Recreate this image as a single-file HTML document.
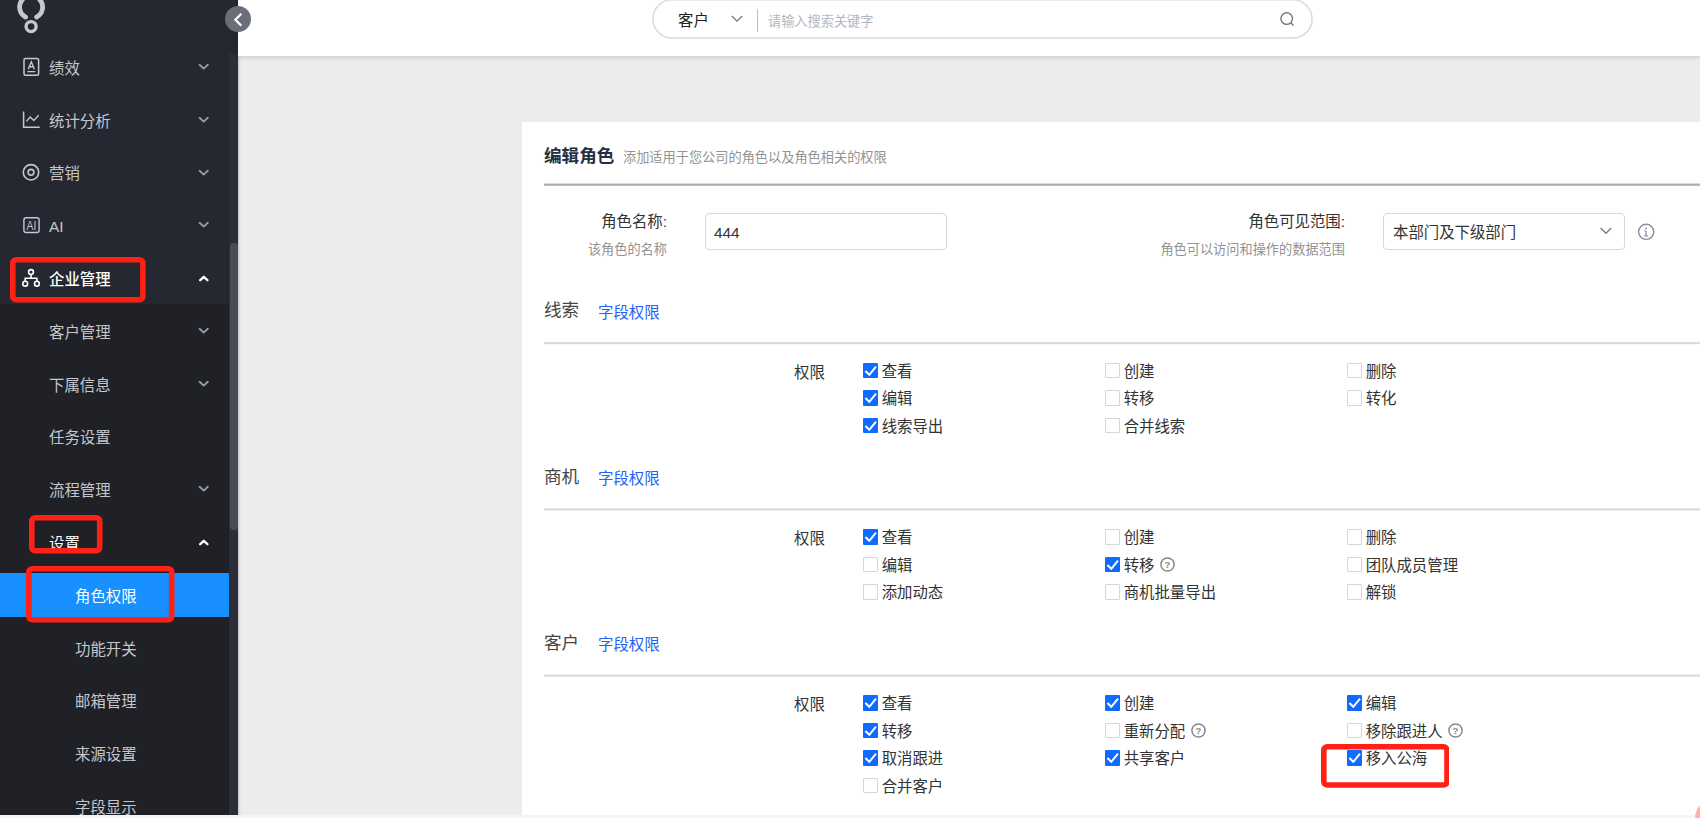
<!DOCTYPE html>
<html lang="zh-CN">
<head>
<meta charset="utf-8">
<title>编辑角色</title>
<style>
*{box-sizing:border-box;margin:0;padding:0}
html,body{width:1700px;height:818px;overflow:hidden;background:#ececec}
body{font-family:"Liberation Sans","Noto Sans CJK SC",sans-serif;font-size:15.4px;color:#333;position:relative}
.abs{position:absolute}
/* sidebar */
#side{position:absolute;left:0;top:0;width:229px;height:815px;background:#252830;overflow:hidden}
#sub{position:absolute;left:0;top:304px;width:229px;height:511px;background:#1f2127}
#track{position:absolute;left:229px;top:0;width:9px;height:815px;background:#2c2f39;box-shadow:1px 0 3px rgba(0,0,0,.18)}
#tracktop{position:absolute;left:229px;top:0;width:9px;height:54px;background:#252830}
#thumb{position:absolute;left:229.5px;top:243px;width:8.5px;height:287px;background:#494c56;border-radius:4px}
.mi{position:absolute;left:0;width:229px;height:44px;line-height:44px;color:#c5c7cd;font-size:15.4px;white-space:nowrap}
.mi span{position:absolute;top:1.9px}
.mi.on{color:#fff}
#active{position:absolute;left:0;top:573px;width:229px;height:44px;background:#1890ff}
/* header */
#head{position:absolute;left:238px;top:0;width:1462px;height:56px;background:#fff;box-shadow:0 1px 5px rgba(0,0,0,.17)}
/* card */
#card{position:absolute;left:522px;top:122px;width:1178px;height:693px;background:#fff}
#bottom{position:absolute;left:0;top:815px;width:1700px;height:3px;background:#f3f4f8}
.t{position:absolute;white-space:nowrap;line-height:20px;margin-top:1px}
.g{color:#939393;font-size:13.2px}
.lk{color:#2163f8}
.cb{position:absolute;width:15.5px;height:15.5px;border:1px solid #d6d6d6;border-radius:1px;background:#fff}
.cb.ck{border:none;background:#0f6bff}
.cb.ck svg{position:absolute;left:0;top:0}
</style>
</head>
<body>
<div id="side">
  <div id="sub"></div>
  <div id="active"></div>
</div>
<div id="track"></div><div id="tracktop"></div><div id="thumb"></div>
<div id="head"></div>
<svg class="abs" style="left:650px;top:0" width="666" height="42" viewBox="0 0 666 42"><rect x="2.9" y="-0.2" width="659.2" height="38.3" rx="19.2" fill="#fff" stroke="#d9d9d9" stroke-width="1.5"/></svg>
<div id="card"></div>
<div id="bottom"></div>
<div id="menu">
<div class="mi" style="top:45.0px"><span style="left:49px">绩效</span></div>
<svg class="abs" style="left:198px;top:63.0px" width="11" height="8" viewBox="0 0 11 8"><path d="M1.6 1.8 L5.7 5.6 L9.8 1.8" fill="none" stroke="#969aa2" stroke-width="1.9" stroke-linecap="round" stroke-linejoin="round"/></svg>
<div class="mi" style="top:97.8px"><span style="left:49px">统计分析</span></div>
<svg class="abs" style="left:198px;top:115.8px" width="11" height="8" viewBox="0 0 11 8"><path d="M1.6 1.8 L5.7 5.6 L9.8 1.8" fill="none" stroke="#969aa2" stroke-width="1.9" stroke-linecap="round" stroke-linejoin="round"/></svg>
<div class="mi" style="top:150.6px"><span style="left:49px">营销</span></div>
<svg class="abs" style="left:198px;top:168.6px" width="11" height="8" viewBox="0 0 11 8"><path d="M1.6 1.8 L5.7 5.6 L9.8 1.8" fill="none" stroke="#969aa2" stroke-width="1.9" stroke-linecap="round" stroke-linejoin="round"/></svg>
<div class="mi" style="top:203.4px"><span style="left:49px">AI</span></div>
<svg class="abs" style="left:198px;top:221.4px" width="11" height="8" viewBox="0 0 11 8"><path d="M1.6 1.8 L5.7 5.6 L9.8 1.8" fill="none" stroke="#969aa2" stroke-width="1.9" stroke-linecap="round" stroke-linejoin="round"/></svg>
<div class="mi on" style="top:256.2px;font-weight:500"><span style="left:49px">企业管理</span></div>
<svg class="abs" style="left:198px;top:274.2px" width="11" height="8" viewBox="0 0 11 8"><path d="M2.2 6.2 L5.8 2.8 L9.4 6.2" fill="none" stroke="#fff" stroke-width="2.3" stroke-linecap="round" stroke-linejoin="round"/></svg>
<div class="mi" style="top:309.0px"><span style="left:49px">客户管理</span></div>
<svg class="abs" style="left:198px;top:327.0px" width="11" height="8" viewBox="0 0 11 8"><path d="M1.6 1.8 L5.7 5.6 L9.8 1.8" fill="none" stroke="#969aa2" stroke-width="1.9" stroke-linecap="round" stroke-linejoin="round"/></svg>
<div class="mi" style="top:361.8px"><span style="left:49px">下属信息</span></div>
<svg class="abs" style="left:198px;top:379.8px" width="11" height="8" viewBox="0 0 11 8"><path d="M1.6 1.8 L5.7 5.6 L9.8 1.8" fill="none" stroke="#969aa2" stroke-width="1.9" stroke-linecap="round" stroke-linejoin="round"/></svg>
<div class="mi" style="top:414.6px"><span style="left:49px">任务设置</span></div>
<div class="mi" style="top:467.4px"><span style="left:49px">流程管理</span></div>
<svg class="abs" style="left:198px;top:485.4px" width="11" height="8" viewBox="0 0 11 8"><path d="M1.6 1.8 L5.7 5.6 L9.8 1.8" fill="none" stroke="#969aa2" stroke-width="1.9" stroke-linecap="round" stroke-linejoin="round"/></svg>
<div class="mi on" style="top:520.2px"><span style="left:49px">设置</span></div>
<svg class="abs" style="left:198px;top:538.2px" width="11" height="8" viewBox="0 0 11 8"><path d="M2.2 6.2 L5.8 2.8 L9.4 6.2" fill="none" stroke="#fff" stroke-width="2.3" stroke-linecap="round" stroke-linejoin="round"/></svg>
<div class="mi on" style="top:573.0px"><span style="left:75px">角色权限</span></div>
<div class="mi" style="top:625.8px"><span style="left:75px">功能开关</span></div>
<div class="mi" style="top:678.6px"><span style="left:75px">邮箱管理</span></div>
<div class="mi" style="top:731.4px"><span style="left:75px">来源设置</span></div>
<div class="mi" style="top:784.2px"><span style="left:75px">字段显示</span></div>
</div>
<svg class="abs" style="left:14px;top:0" width="36" height="36" viewBox="0 0 36 36"><path d="M11.55 17.1 A11.5 11.5 0 1 1 22.65 17.1" fill="none" stroke="#c5c8d0" stroke-width="4.8" stroke-linecap="round"/><circle cx="17.1" cy="26.6" r="5" fill="none" stroke="#c5c8d0" stroke-width="3.4"/></svg>
<svg class="abs" style="left:22px;top:57px" width="20" height="20" viewBox="0 0 20 20"><rect x="2" y="1.6" width="14.6" height="16.6" rx="1.5" fill="none" stroke="#c5c8d0" stroke-width="1.5"/><path d="M6.2 12.2 L9.3 4.8 L12.4 12.2 M7.4 9.8 H11.2 M5.4 14.6 H13.2" fill="none" stroke="#c5c8d0" stroke-width="1.4"/></svg>
<svg class="abs" style="left:22px;top:110px" width="20" height="20" viewBox="0 0 20 20"><path d="M1.6 1.4 V17.2 H17.8" fill="none" stroke="#c5c8d0" stroke-width="1.5"/><path d="M4.4 11.4 L8.2 7 L11.8 10.6 L16.6 5.2" fill="none" stroke="#c5c8d0" stroke-width="1.4"/></svg>
<svg class="abs" style="left:21px;top:162px" width="20" height="20" viewBox="0 0 20 20"><circle cx="10" cy="10.3" r="7.7" fill="none" stroke="#c5c8d0" stroke-width="1.6"/><circle cx="10" cy="10.3" r="2.9" fill="none" stroke="#c5c8d0" stroke-width="1.6"/></svg>
<svg class="abs" style="left:22px;top:216px" width="20" height="20" viewBox="0 0 20 20"><rect x="1.9" y="1.7" width="15.2" height="14.8" rx="2.2" fill="none" stroke="#c5c8d0" stroke-width="1.4"/><text x="0" y="0" transform="translate(9.5 13.7) scale(0.82 1)" font-family="Liberation Sans, sans-serif" font-size="12.6" fill="#c5c8d0" text-anchor="middle">AI</text></svg>
<svg class="abs" style="left:21px;top:267px" width="20" height="20" viewBox="0 0 20 20"><g fill="none" stroke="#fff" stroke-width="1.6"><circle cx="10" cy="5" r="2.4"/><circle cx="4.2" cy="16.7" r="2.4"/><circle cx="15.9" cy="16.7" r="2.4"/><path d="M10 7.4 V11.2 M4.2 14.3 V11.2 H15.9 V14.3"/></g></svg>
<svg class="abs" style="left:224px;top:4.5px" width="28" height="28" viewBox="0 0 28 28"><circle cx="14" cy="14" r="13" fill="#6a6e78"/><path d="M17.3 8.8 L11.4 14.7 L17.3 20.6" fill="none" stroke="#fff" stroke-width="2.2" stroke-linecap="butt" stroke-linejoin="miter"/></svg>
<div class="t" style="left:678px;top:10px;font-size:15.4px;color:#222">客户</div>
<svg class="abs" style="left:730px;top:14.3px" width="14" height="10" viewBox="0 0 14 10"><path d="M1.8 2 L7 7.2 L12.2 2" fill="none" stroke="#777" stroke-width="1.3"/></svg>
<div class="abs" style="left:757px;top:9px;width:1px;height:23px;background:#bdbdbd"></div>
<div class="t" style="left:768px;top:10.8px;font-size:13.2px;color:#b3b6c2">请输入搜索关键字</div>
<svg class="abs" style="left:1278px;top:10px" width="20" height="20" viewBox="0 0 20 20"><circle cx="8.7" cy="8.6" r="5.8" fill="none" stroke="#777" stroke-width="1.4"/><path d="M12.9 12.9 L15.6 15.4" stroke="#777" stroke-width="1.4" fill="none"/></svg>
<div class="t" style="left:544px;top:144.5px;font-size:17.6px;font-weight:bold;color:#262f42">编辑角色</div>
<div class="t g" style="left:623px;top:147px">添加适用于您公司的角色以及角色相关的权限</div>
<svg class="abs" style="left:544px;top:182px" width="1156" height="6" viewBox="0 0 1156 6"><rect x="0" y="1.6" width="1156" height="2.2" fill="#adadad"/></svg>
<div class="t" style="right:1033px;top:211px">角色名称:</div>
<div class="t g" style="right:1033px;top:239px">该角色的名称</div>
<div class="abs" style="left:705px;top:213.2px;width:242px;height:37.3px;border:1px solid #d9d9d9;border-radius:4px"></div>
<div class="t" style="left:714px;top:222px">444</div>
<div class="t" style="right:355px;top:211px">角色可见范围:</div>
<div class="t g" style="right:355px;top:239px">角色可以访问和操作的数据范围</div>
<div class="abs" style="left:1383px;top:213.2px;width:242px;height:37.3px;border:1px solid #d9d9d9;border-radius:4px"></div>
<div class="t" style="left:1393px;top:222px">本部门及下级部门</div>
<svg class="abs" style="left:1599px;top:226px" width="14" height="10" viewBox="0 0 14 10"><path d="M1.6 2 L7 7.3 L12.2 2" fill="none" stroke="#7c7c7c" stroke-width="1.4"/></svg>
<svg class="abs" style="left:1637px;top:223px" width="18" height="18" viewBox="0 0 18 18"><circle cx="9.2" cy="8.8" r="7.6" fill="none" stroke="#8a8f9e" stroke-width="1.4"/><path d="M9 8 V12.6 M7.4 8 H9 M7.2 12.8 H10.8" stroke="#8a8f9e" stroke-width="1.2" fill="none"/><circle cx="9" cy="5.4" r="0.9" fill="#8a8f9e"/></svg>
<div class="t" style="left:544px;top:299.4px;font-size:17.6px;color:#454545">线索</div>
<div class="t lk" style="left:598px;top:302px">字段权限</div>
<svg class="abs" style="left:544px;top:341px" width="1156" height="5" viewBox="0 0 1156 5"><rect x="0" y="1.20" width="1156" height="2" fill="#d8d8d8"/></svg>
<div class="t" style="left:794px;top:361.6px">权限</div>
<div class="cb ck" style="left:862.6px;top:362.7px"><svg width="15.5" height="15.5" viewBox="0 0 15.5 15.5"><path d="M2.4 8 L6.3 11.8 L13 3.6" fill="none" stroke="#fff" stroke-width="2"/></svg></div>
<div class="t" style="left:881.7px;top:360.7px">查看</div>
<div class="cb" style="left:1104.6px;top:362.7px"></div>
<div class="t" style="left:1123.7px;top:360.7px">创建</div>
<div class="cb" style="left:1346.6px;top:362.7px"></div>
<div class="t" style="left:1365.7px;top:360.7px">删除</div>
<div class="cb ck" style="left:862.6px;top:390.2px"><svg width="15.5" height="15.5" viewBox="0 0 15.5 15.5"><path d="M2.4 8 L6.3 11.8 L13 3.6" fill="none" stroke="#fff" stroke-width="2"/></svg></div>
<div class="t" style="left:881.7px;top:388.2px">编辑</div>
<div class="cb" style="left:1104.6px;top:390.2px"></div>
<div class="t" style="left:1123.7px;top:388.2px">转移</div>
<div class="cb" style="left:1346.6px;top:390.2px"></div>
<div class="t" style="left:1365.7px;top:388.2px">转化</div>
<div class="cb ck" style="left:862.6px;top:417.7px"><svg width="15.5" height="15.5" viewBox="0 0 15.5 15.5"><path d="M2.4 8 L6.3 11.8 L13 3.6" fill="none" stroke="#fff" stroke-width="2"/></svg></div>
<div class="t" style="left:881.7px;top:415.7px">线索导出</div>
<div class="cb" style="left:1104.6px;top:417.7px"></div>
<div class="t" style="left:1123.7px;top:415.7px">合并线索</div>
<div class="t" style="left:544px;top:465.7px;font-size:17.6px;color:#454545">商机</div>
<div class="t lk" style="left:598px;top:468.3px">字段权限</div>
<svg class="abs" style="left:544px;top:507px" width="1156" height="5" viewBox="0 0 1156 5"><rect x="0" y="1.40" width="1156" height="2" fill="#d8d8d8"/></svg>
<div class="t" style="left:794px;top:527.9px">权限</div>
<div class="cb ck" style="left:862.6px;top:529.0px"><svg width="15.5" height="15.5" viewBox="0 0 15.5 15.5"><path d="M2.4 8 L6.3 11.8 L13 3.6" fill="none" stroke="#fff" stroke-width="2"/></svg></div>
<div class="t" style="left:881.7px;top:527.0px">查看</div>
<div class="cb" style="left:1104.6px;top:529.0px"></div>
<div class="t" style="left:1123.7px;top:527.0px">创建</div>
<div class="cb" style="left:1346.6px;top:529.0px"></div>
<div class="t" style="left:1365.7px;top:527.0px">删除</div>
<div class="cb" style="left:862.6px;top:556.5px"></div>
<div class="t" style="left:881.7px;top:554.5px">编辑</div>
<div class="cb ck" style="left:1104.6px;top:556.5px"><svg width="15.5" height="15.5" viewBox="0 0 15.5 15.5"><path d="M2.4 8 L6.3 11.8 L13 3.6" fill="none" stroke="#fff" stroke-width="2"/></svg></div>
<div class="t" style="left:1123.7px;top:554.5px">转移</div>
<svg class="abs" style="left:1159.8px;top:557.3px" width="15" height="15" viewBox="0 0 15 15"><circle cx="7.5" cy="7.5" r="6.6" fill="none" stroke="#868a90" stroke-width="1.5"/><text x="7.5" y="10.9" font-family="Liberation Sans, sans-serif" font-size="9.5" font-weight="bold" fill="#868a90" text-anchor="middle">?</text></svg>
<div class="cb" style="left:1346.6px;top:556.5px"></div>
<div class="t" style="left:1365.7px;top:554.5px">团队成员管理</div>
<div class="cb" style="left:862.6px;top:584.0px"></div>
<div class="t" style="left:881.7px;top:582.0px">添加动态</div>
<div class="cb" style="left:1104.6px;top:584.0px"></div>
<div class="t" style="left:1123.7px;top:582.0px">商机批量导出</div>
<div class="cb" style="left:1346.6px;top:584.0px"></div>
<div class="t" style="left:1365.7px;top:582.0px">解锁</div>
<div class="t" style="left:544px;top:631.8px;font-size:17.6px;color:#454545">客户</div>
<div class="t lk" style="left:598px;top:634.4px">字段权限</div>
<svg class="abs" style="left:544px;top:673px" width="1156" height="5" viewBox="0 0 1156 5"><rect x="0" y="1.60" width="1156" height="2" fill="#d8d8d8"/></svg>
<div class="t" style="left:794px;top:694.0px">权限</div>
<div class="cb ck" style="left:862.6px;top:695.1px"><svg width="15.5" height="15.5" viewBox="0 0 15.5 15.5"><path d="M2.4 8 L6.3 11.8 L13 3.6" fill="none" stroke="#fff" stroke-width="2"/></svg></div>
<div class="t" style="left:881.7px;top:693.1px">查看</div>
<div class="cb ck" style="left:1104.6px;top:695.1px"><svg width="15.5" height="15.5" viewBox="0 0 15.5 15.5"><path d="M2.4 8 L6.3 11.8 L13 3.6" fill="none" stroke="#fff" stroke-width="2"/></svg></div>
<div class="t" style="left:1123.7px;top:693.1px">创建</div>
<div class="cb ck" style="left:1346.6px;top:695.1px"><svg width="15.5" height="15.5" viewBox="0 0 15.5 15.5"><path d="M2.4 8 L6.3 11.8 L13 3.6" fill="none" stroke="#fff" stroke-width="2"/></svg></div>
<div class="t" style="left:1365.7px;top:693.1px">编辑</div>
<div class="cb ck" style="left:862.6px;top:722.6px"><svg width="15.5" height="15.5" viewBox="0 0 15.5 15.5"><path d="M2.4 8 L6.3 11.8 L13 3.6" fill="none" stroke="#fff" stroke-width="2"/></svg></div>
<div class="t" style="left:881.7px;top:720.6px">转移</div>
<div class="cb" style="left:1104.6px;top:722.6px"></div>
<div class="t" style="left:1123.7px;top:720.6px">重新分配</div>
<svg class="abs" style="left:1190.6px;top:723.4px" width="15" height="15" viewBox="0 0 15 15"><circle cx="7.5" cy="7.5" r="6.6" fill="none" stroke="#868a90" stroke-width="1.5"/><text x="7.5" y="10.9" font-family="Liberation Sans, sans-serif" font-size="9.5" font-weight="bold" fill="#868a90" text-anchor="middle">?</text></svg>
<div class="cb" style="left:1346.6px;top:722.6px"></div>
<div class="t" style="left:1365.7px;top:720.6px">移除跟进人</div>
<svg class="abs" style="left:1448.0px;top:723.4px" width="15" height="15" viewBox="0 0 15 15"><circle cx="7.5" cy="7.5" r="6.6" fill="none" stroke="#868a90" stroke-width="1.5"/><text x="7.5" y="10.9" font-family="Liberation Sans, sans-serif" font-size="9.5" font-weight="bold" fill="#868a90" text-anchor="middle">?</text></svg>
<div class="cb ck" style="left:862.6px;top:750.1px"><svg width="15.5" height="15.5" viewBox="0 0 15.5 15.5"><path d="M2.4 8 L6.3 11.8 L13 3.6" fill="none" stroke="#fff" stroke-width="2"/></svg></div>
<div class="t" style="left:881.7px;top:748.1px">取消跟进</div>
<div class="cb ck" style="left:1104.6px;top:750.1px"><svg width="15.5" height="15.5" viewBox="0 0 15.5 15.5"><path d="M2.4 8 L6.3 11.8 L13 3.6" fill="none" stroke="#fff" stroke-width="2"/></svg></div>
<div class="t" style="left:1123.7px;top:748.1px">共享客户</div>
<div class="cb ck" style="left:1346.6px;top:750.1px"><svg width="15.5" height="15.5" viewBox="0 0 15.5 15.5"><path d="M2.4 8 L6.3 11.8 L13 3.6" fill="none" stroke="#fff" stroke-width="2"/></svg></div>
<div class="t" style="left:1365.7px;top:748.1px">移入公海</div>
<div class="cb" style="left:862.6px;top:777.6px"></div>
<div class="t" style="left:881.7px;top:775.6px">合并客户</div>
<div class="abs" style="left:1695px;top:799px;width:38px;height:38px;border-radius:19px;background:#ffb0b5"></div>
<svg class="abs" style="left:10.3px;top:257px" width="135.7" height="45.6" viewBox="0 0 135.7 45.6"><rect x="2.8" y="2.8" width="130.1" height="40.0" rx="3.4" fill="none" stroke="#ff2116" stroke-width="5.6"/></svg>
<svg class="abs" style="left:29px;top:515px" width="73.5" height="38.5" viewBox="0 0 73.5 38.5"><rect x="2.8" y="2.8" width="67.9" height="32.9" rx="3.4" fill="none" stroke="#ff2116" stroke-width="5.6"/></svg>
<svg class="abs" style="left:26px;top:566px" width="148.5" height="56.5" viewBox="0 0 148.5 56.5"><rect x="2.8" y="2.8" width="142.9" height="50.9" rx="3.4" fill="none" stroke="#ff2116" stroke-width="5.6"/></svg>
<svg class="abs" style="left:1320.5px;top:744px" width="128.8" height="43.8" viewBox="0 0 128.8 43.8"><rect x="2.8" y="2.8" width="123.2" height="38.2" rx="3.4" fill="none" stroke="#ff2116" stroke-width="5.6"/></svg>
</body>
</html>
